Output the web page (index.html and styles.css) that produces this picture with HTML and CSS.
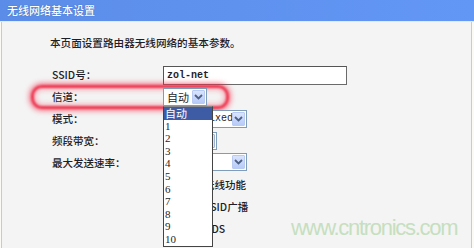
FILE: index.html
```html
<!DOCTYPE html>
<html lang="zh-CN">
<head>
    <meta charset="UTF-8">
    <title>无线网络基本设置</title>
    <link rel="stylesheet" href="styles.css">
</head>
<body>
    <div class="panel">
        <div class="titlebar">无线网络基本设置</div>

        <div class="content">
            <p class="intro">本页面设置路由器无线网络的基本参数。</p>

            <div class="form">
                <div class="row">
                    <label>SSID号：</label>
                    <div class="field"><span class="text-input">zol-net</span></div>
                </div>
                <div class="row row-channel">
                    <span class="ring"></span>
                    <label>信道：</label>
                    <div class="field">
                        <div class="select select-channel">
                            <span class="value">自动</span>
                            <span class="arrow"><svg width="9" height="6" viewBox="0 0 9 6"><path d="M1 1 L4.5 4.5 L8 1" fill="none" stroke="#4d6185" stroke-width="1.8"/></svg></span>
                            <!-- lista desplegada del canal -->
                            <ul class="dropdown">
                                <li class="active">自动</li>
                                <li>1</li>
                                <li>2</li>
                                <li>3</li>
                                <li>4</li>
                                <li>5</li>
                                <li>6</li>
                                <li>7</li>
                                <li>8</li>
                                <li>9</li>
                                <li>10</li>
                            </ul>
                        </div>
                    </div>
                </div>
                <div class="row">
                    <label>模式：</label>
                    <div class="field">
                        <div class="select select-wide">
                            <span class="value mono">11bgn mixed</span>
                            <span class="arrow"><svg width="9" height="6" viewBox="0 0 9 6"><path d="M1 1 L4.5 4.5 L8 1" fill="none" stroke="#4d6185" stroke-width="1.8"/></svg></span>
                        </div>
                    </div>
                </div>
                <div class="row">
                    <label>频段带宽：</label>
                    <div class="field">
                        <div class="select select-band">
                            <span class="value">自动</span>
                            <span class="arrow arrow-plain"></span>
                        </div>
                    </div>
                </div>
                <div class="row">
                    <label>最大发送速率：</label>
                    <div class="field">
                        <div class="select select-wide select-rate">
                            <span class="value">自动</span>
                            <span class="arrow"><svg width="9" height="6" viewBox="0 0 9 6"><path d="M1 1 L4.5 4.5 L8 1" fill="none" stroke="#4d6185" stroke-width="1.8"/></svg></span>
                        </div>
                    </div>
                </div>
                <div class="row">
                    <label></label>
                    <div class="field check"><input type="checkbox" checked><span>开启无线功能</span></div>
                </div>
                <div class="row">
                    <label></label>
                    <div class="field check"><input type="checkbox" checked><span>开启SSID广播</span></div>
                </div>
                <div class="row">
                    <label></label>
                    <div class="field check check-wds"><input type="checkbox"><span>开启WDS</span></div>
                </div>
            </div>
        </div>

        <div class="watermark">www.cntronics.com</div>
    </div>
</body>
</html>
```

FILE: styles.css
```css
html, body {
    margin: 0;
    padding: 0;
    background-color: #fbfaf4;
}
body {
    width: 474px;
    height: 248px;
    overflow: hidden;
    font-family: "Noto Sans CJK SC", "DejaVu Sans", sans-serif;
    color: #1e1e28;
}
.panel {
    position: relative;
    height: 248px;
    margin-left: 1px;
    margin-right: 2px;
    border-left: 1px solid #d5cca4;
    border-right: 1px solid #d9cda0;
    background-color: #f4f4f4;
}
.titlebar {
    height: 21px;
    line-height: 21px;
    margin-left: -2px;
    margin-right: -3px;
    padding-left: 7px;
    background: linear-gradient(to right, #5b8de8, #6397f6);
    border-bottom: 1px solid #e2e8f4;
    color: #fff;
    font-size: 11px;
    font-weight: 500;
    text-shadow: 0 0 1px rgba(20, 40, 110, 0.6);
}
.content {
    padding: 14px 0 0 48px;
}
.intro {
    margin: 0;
    font-size: 10.6px;
    font-weight: 500;
    line-height: 14px;
}
.form {
    margin-top: 14px;
}
.row {
    position: relative;
    display: grid;
    grid-template-columns: 113px auto;
    align-items: center;
    height: 22px;
}
.row label {
    font-size: 10.5px;
    font-weight: 500;
    line-height: 14px;
    padding-left: 2px;
}
.field {
    display: flex;
    align-items: center;
}
.text-input {
    box-sizing: border-box;
    width: 184px;
    height: 19px;
    line-height: 17px;
    padding-left: 3px;
    border: 1px solid #6a6a6a;
    border-top-color: #555;
    border-left-color: #555;
    background-color: #fff;
    font-family: "Liberation Mono", monospace;
    font-weight: bold;
    font-size: 10px;
}
.select {
    position: relative;
    box-sizing: border-box;
    display: flex;
    align-items: center;
    justify-content: space-between;
    height: 18px;
    padding: 1px;
    border: 1px solid #7f9db9;
    background-color: #fff;
}
.select .value {
    padding-left: 2px;
    font-size: 11px;
    line-height: 14px;
    white-space: nowrap;
    overflow: hidden;
}
.select .mono {
    font-family: "Liberation Mono", monospace;
    font-size: 10px;
}
.select-channel {
    width: 44px;
}
.select-wide {
    width: 84px;
}
.select-band {
    width: 54px;
}
.select-rate {
    margin-top: -3px;
}
.arrow {
    flex: none;
    box-sizing: border-box;
    display: flex;
    align-items: center;
    justify-content: center;
    width: 13px;
    height: 14px;
    border: 1px solid #b9cbf3;
    border-radius: 1px;
    background: linear-gradient(#d9e4fd, #b7cbf8);
}
.arrow-plain {
    background: #dfe7f7;
    border-color: #9fb2d2;
}
.dropdown {
    position: absolute;
    top: 100%;
    left: -1px;
    z-index: 5;
    width: 48px;
    margin: 1px 0 0;
    padding: 0;
    list-style: none;
    background-color: #fff;
    border: 1px solid #444;
    border-top-color: #888;
}
.dropdown li {
    height: 12.6px;
    line-height: 12.6px;
    padding-left: 1px;
    font-size: 11px;
    font-family: "Liberation Serif", "Noto Sans CJK SC", serif;
}
.dropdown li.active {
    background-color: #3e5ba6;
    color: #fff;
    font-family: "Noto Sans CJK SC", sans-serif;
}
.check input {
    width: 12px;
    height: 12px;
    margin: 0 8px 0 0;
}
.check span {
    font-size: 10.5px;
    font-weight: 500;
    line-height: 14px;
    white-space: nowrap;
}
.check-wds input {
    margin-right: 6px;
}
.ring {
    position: absolute;
    left: -19px;
    top: -1px;
    width: 198px;
    height: 24px;
    box-sizing: border-box;
    border: 3px solid rgba(236, 30, 60, 0.9);
    border-radius: 11px;
    box-shadow: 0 0 5px 2px rgba(240, 50, 75, 0.6), inset 0 0 5px 2px rgba(245, 110, 125, 0.5);
    filter: blur(0.8px);
    pointer-events: none;
}
.watermark {
    position: absolute;
    left: 289px;
    top: 215px;
    font-family: "Liberation Sans", Arial, sans-serif;
    font-size: 22px;
    letter-spacing: -1.3px;
    color: #c6dfbf;
}
```
